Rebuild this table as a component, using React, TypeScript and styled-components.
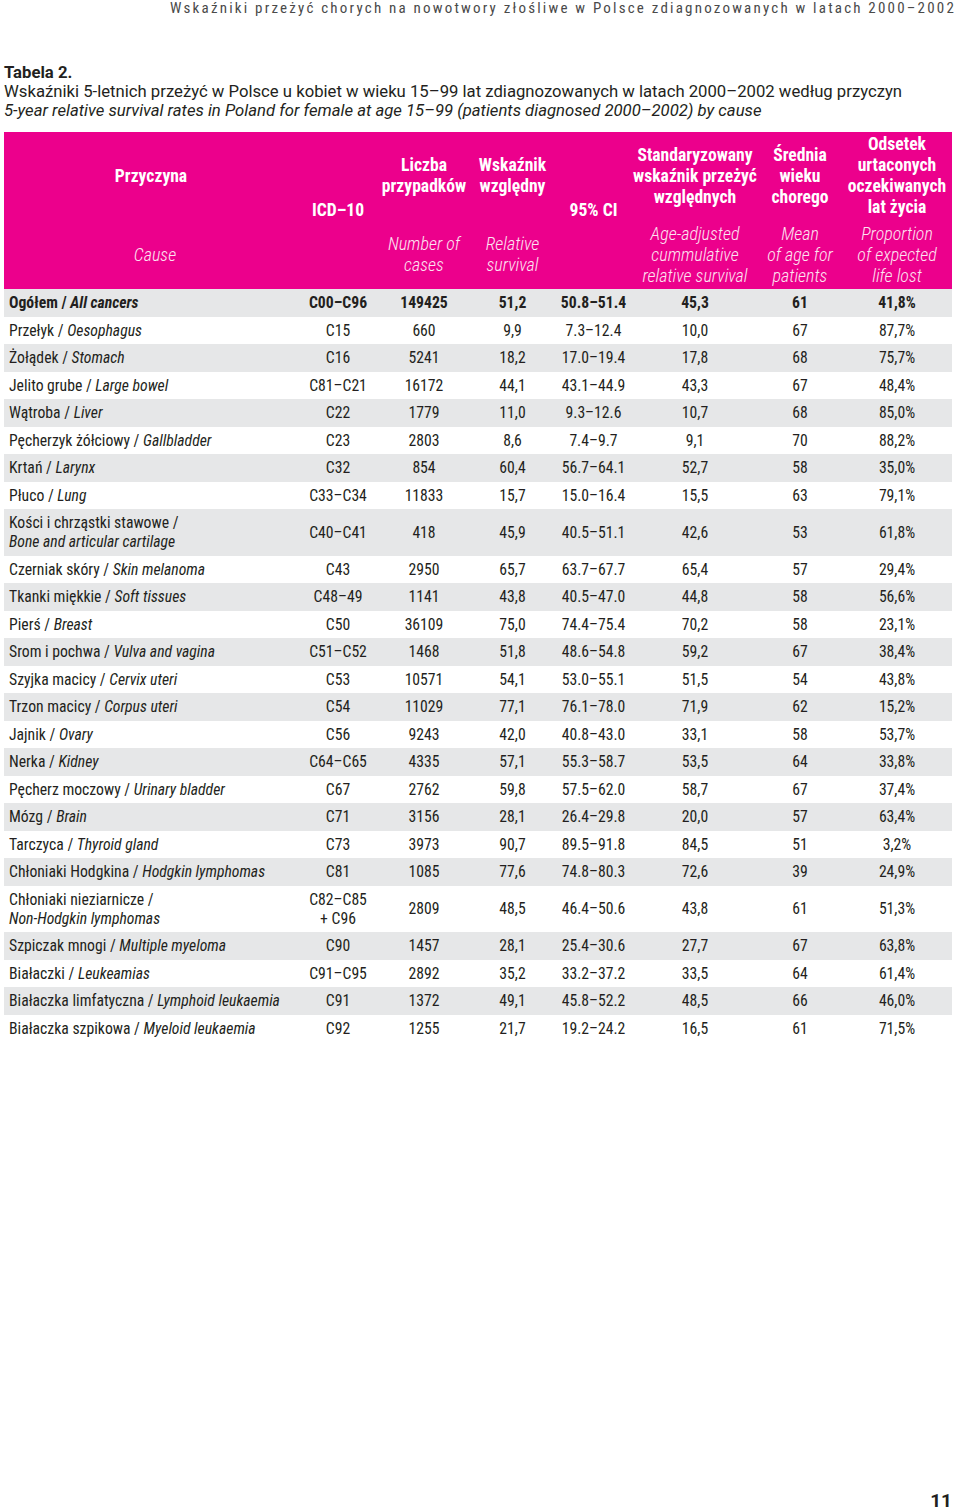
import React from "react";
import styled, { createGlobalStyle } from "styled-components";

const COND = `"Roboto Condensed", "Open Sans", sans-serif`;
const REG = `Roboto, "Liberation Sans", sans-serif`;
const COLS = "294px 80px 92px 85px 77px 126px 84px 110px";

const Global = createGlobalStyle`
  html, body { margin: 0; padding: 0; background: #ffffff; }
  body { font-family: ${COND}; color: #231f20; }
`;

const Page = styled.div`
  width: 960px;
  height: 1509px;
  position: relative;
  box-sizing: border-box;
  padding: 0 4px;
  display: flex;
  flex-direction: column;
`;

const RunningHead = styled.div`
  text-align: right;
  font-family: ${COND};
  font-size: 15px;
  letter-spacing: 2.2px;
  color: #4a4a4a;
  line-height: 17px;
`;

const Caption = styled.div`
  margin-top: 46px;
  font-family: ${REG};
  font-size: 16.7px;
  line-height: 19px;
  color: #231f20;
`;

const CapTitle = styled.div`
  font-weight: bold;
`;

const CapLine = styled.div<{ $italic?: boolean }>`
  font-style: ${(p) => (p.$italic ? "italic" : "normal")};
`;

const Table = styled.div`
  margin-top: 12px;
  width: 948px;
`;

const HeadRow = styled.div`
  display: grid;
  grid-template-columns: ${COLS};
  height: 157px;
  background: #ec008c;
  color: #ffffff;
`;

const HeadCell = styled.div<{ $single?: boolean }>`
  display: flex;
  flex-direction: column;
  justify-content: ${(p) => (p.$single ? "center" : "flex-start")};
  align-items: center;
  text-align: center;
`;

const HeadPl = styled.div`
  height: 88px;
  display: flex;
  align-items: center;
  justify-content: center;
  font-weight: bold;
  font-size: 17.6px;
  line-height: 21px;
  white-space: nowrap;
`;

const HeadSingle = styled.div`
  font-weight: bold;
  font-size: 17.6px;
  line-height: 21px;
`;

const HeadEn = styled.div<{ $shift?: number }>`
  height: 68px;
  display: flex;
  align-items: center;
  justify-content: center;
  font-style: italic;
  font-weight: 300;
  font-size: 18px;
  line-height: 21px;
  color: #fde4f1;
  white-space: nowrap;
  padding-left: ${(p) => p.$shift ?? 0}px;
`;

const Row = styled.div<{ $shade: boolean; $tall?: boolean }>`
  display: grid;
  grid-template-columns: ${COLS};
  height: ${(p) => (p.$tall ? "46.5px" : "27.5px")};
  background: ${(p) => (p.$shade ? "#e6e7e8" : "#ffffff")};
  align-items: center;
  font-size: 15.7px;
  line-height: 19px;
`;

const NameCell = styled.div<{ $bold?: boolean }>`
  padding-left: 5px;
  font-weight: ${(p) => (p.$bold ? "bold" : "normal")};
  white-space: nowrap;
`;

const En = styled.span`
  font-style: italic;
`;

const Cell = styled.div<{ $bold?: boolean }>`
  text-align: center;
  font-weight: ${(p) => (p.$bold ? "bold" : "normal")};
  white-space: nowrap;
`;

const PageNum = styled.div`
  position: absolute;
  right: 8px;
  bottom: -3px;
  font-family: ${REG};
  font-weight: bold;
  font-size: 19px;
  color: #231f20;
`;

type R = {
  pl: string;
  en: string;
  en2?: boolean;
  icd: string;
  n: string;
  rs: string;
  ci: string;
  aa: string;
  age: string;
  lost: string;
  bold?: boolean;
  tall?: boolean;
};

const rows: R[] = [
  { pl: "Ogółem", en: "All cancers", icd: "C00–C96", n: "149425", rs: "51,2", ci: "50.8–51.4", aa: "45,3", age: "61", lost: "41,8%", bold: true },
  { pl: "Przełyk", en: "Oesophagus", icd: "C15", n: "660", rs: "9,9", ci: "7.3–12.4", aa: "10,0", age: "67", lost: "87,7%" },
  { pl: "Żołądek", en: "Stomach", icd: "C16", n: "5241", rs: "18,2", ci: "17.0–19.4", aa: "17,8", age: "68", lost: "75,7%" },
  { pl: "Jelito grube", en: "Large bowel", icd: "C81–C21", n: "16172", rs: "44,1", ci: "43.1–44.9", aa: "43,3", age: "67", lost: "48,4%" },
  { pl: "Wątroba", en: "Liver", icd: "C22", n: "1779", rs: "11,0", ci: "9.3–12.6", aa: "10,7", age: "68", lost: "85,0%" },
  { pl: "Pęcherzyk żółciowy", en: "Gallbladder", icd: "C23", n: "2803", rs: "8,6", ci: "7.4–9.7", aa: "9,1", age: "70", lost: "88,2%" },
  { pl: "Krtań", en: "Larynx", icd: "C32", n: "854", rs: "60,4", ci: "56.7–64.1", aa: "52,7", age: "58", lost: "35,0%" },
  { pl: "Płuco", en: "Lung", icd: "C33–C34", n: "11833", rs: "15,7", ci: "15.0–16.4", aa: "15,5", age: "63", lost: "79,1%" },
  { pl: "Kości i chrząstki stawowe", en: "Bone and articular cartilage", en2: true, icd: "C40–C41", n: "418", rs: "45,9", ci: "40.5–51.1", aa: "42,6", age: "53", lost: "61,8%", tall: true },
  { pl: "Czerniak skóry", en: "Skin melanoma", icd: "C43", n: "2950", rs: "65,7", ci: "63.7–67.7", aa: "65,4", age: "57", lost: "29,4%" },
  { pl: "Tkanki miękkie", en: "Soft tissues", icd: "C48–49", n: "1141", rs: "43,8", ci: "40.5–47.0", aa: "44,8", age: "58", lost: "56,6%" },
  { pl: "Pierś", en: "Breast", icd: "C50", n: "36109", rs: "75,0", ci: "74.4–75.4", aa: "70,2", age: "58", lost: "23,1%" },
  { pl: "Srom i pochwa", en: "Vulva and vagina", icd: "C51–C52", n: "1468", rs: "51,8", ci: "48.6–54.8", aa: "59,2", age: "67", lost: "38,4%" },
  { pl: "Szyjka macicy", en: "Cervix uteri", icd: "C53", n: "10571", rs: "54,1", ci: "53.0–55.1", aa: "51,5", age: "54", lost: "43,8%" },
  { pl: "Trzon macicy", en: "Corpus uteri", icd: "C54", n: "11029", rs: "77,1", ci: "76.1–78.0", aa: "71,9", age: "62", lost: "15,2%" },
  { pl: "Jajnik", en: "Ovary", icd: "C56", n: "9243", rs: "42,0", ci: "40.8–43.0", aa: "33,1", age: "58", lost: "53,7%" },
  { pl: "Nerka", en: "Kidney", icd: "C64–C65", n: "4335", rs: "57,1", ci: "55.3–58.7", aa: "53,5", age: "64", lost: "33,8%" },
  { pl: "Pęcherz moczowy", en: "Urinary bladder", icd: "C67", n: "2762", rs: "59,8", ci: "57.5–62.0", aa: "58,7", age: "67", lost: "37,4%" },
  { pl: "Mózg", en: "Brain", icd: "C71", n: "3156", rs: "28,1", ci: "26.4–29.8", aa: "20,0", age: "57", lost: "63,4%" },
  { pl: "Tarczyca", en: "Thyroid gland", icd: "C73", n: "3973", rs: "90,7", ci: "89.5–91.8", aa: "84,5", age: "51", lost: "3,2%" },
  { pl: "Chłoniaki Hodgkina", en: "Hodgkin lymphomas", icd: "C81", n: "1085", rs: "77,6", ci: "74.8–80.3", aa: "72,6", age: "39", lost: "24,9%" },
  { pl: "Chłoniaki nieziarnicze", en: "Non-Hodgkin lymphomas", en2: true, icd: "C82–C85\n+ C96", n: "2809", rs: "48,5", ci: "46.4–50.6", aa: "43,8", age: "61", lost: "51,3%", tall: true },
  { pl: "Szpiczak mnogi", en: "Multiple myeloma", icd: "C90", n: "1457", rs: "28,1", ci: "25.4–30.6", aa: "27,7", age: "67", lost: "63,8%" },
  { pl: "Białaczki", en: "Leukeamias", icd: "C91–C95", n: "2892", rs: "35,2", ci: "33.2–37.2", aa: "33,5", age: "64", lost: "61,4%" },
  { pl: "Białaczka limfatyczna", en: "Lymphoid leukaemia", icd: "C91", n: "1372", rs: "49,1", ci: "45.8–52.2", aa: "48,5", age: "66", lost: "46,0%" },
  { pl: "Białaczka szpikowa", en: "Myeloid leukaemia", icd: "C92", n: "1255", rs: "21,7", ci: "19.2–24.2", aa: "16,5", age: "61", lost: "71,5%" },
];

const Lines = ({ text }: { text: string }) => (
  <>
    {text.split("\n").map((t, i) => (
      <div key={i}>{t}</div>
    ))}
  </>
);

export default function App() {
  return (
    <>
      <Global />
      <Page>
        <RunningHead>
          Wskaźniki przeżyć chorych na nowotwory złośliwe w Polsce zdiagnozowanych w latach 2000–2002
        </RunningHead>
        <Caption>
          <CapTitle>Tabela 2.</CapTitle>
          <CapLine>
            Wskaźniki 5-letnich przeżyć w Polsce u kobiet w wieku 15–99 lat zdiagnozowanych w latach 2000–2002 według przyczyn
          </CapLine>
          <CapLine $italic>
            5-year relative survival rates in Poland for female at age 15–99 (patients diagnosed 2000–2002) by cause
          </CapLine>
        </Caption>
        <Table>
          <HeadRow>
            <HeadCell>
              <HeadPl>Przyczyna</HeadPl>
              <HeadEn $shift={8}>Cause</HeadEn>
            </HeadCell>
            <HeadCell $single>
              <HeadSingle>ICD–10</HeadSingle>
            </HeadCell>
            <HeadCell>
              <HeadPl><div><Lines text={"Liczba\nprzypadków"} /></div></HeadPl>
              <HeadEn><div><Lines text={"Number of\ncases"} /></div></HeadEn>
            </HeadCell>
            <HeadCell>
              <HeadPl><div><Lines text={"Wskaźnik\nwzględny"} /></div></HeadPl>
              <HeadEn><div><Lines text={"Relative\nsurvival"} /></div></HeadEn>
            </HeadCell>
            <HeadCell $single>
              <HeadSingle>95% CI</HeadSingle>
            </HeadCell>
            <HeadCell>
              <HeadPl><div><Lines text={"Standaryzowany\nwskaźnik przeżyć\nwzględnych"} /></div></HeadPl>
              <HeadEn><div><Lines text={"Age-adjusted\ncummulative\nrelative survival"} /></div></HeadEn>
            </HeadCell>
            <HeadCell>
              <HeadPl><div><Lines text={"Średnia\nwieku\nchorego"} /></div></HeadPl>
              <HeadEn><div><Lines text={"Mean\nof age for\npatients"} /></div></HeadEn>
            </HeadCell>
            <HeadCell>
              <HeadPl><div><Lines text={"Odsetek\nurtaconych\noczekiwanych\nlat życia"} /></div></HeadPl>
              <HeadEn><div><Lines text={"Proportion\nof expected\nlife lost"} /></div></HeadEn>
            </HeadCell>
          </HeadRow>
          {rows.map((r, i) => (
            <Row key={r.pl} $shade={i % 2 === 0} $tall={r.tall}>
              <NameCell $bold={r.bold}>
                {r.en2 ? (
                  <>
                    <div>{r.pl} /</div>
                    <div><En>{r.en}</En></div>
                  </>
                ) : (
                  <>
                    {r.pl} / <En>{r.en}</En>
                  </>
                )}
              </NameCell>
              <Cell $bold={r.bold}><Lines text={r.icd} /></Cell>
              <Cell $bold={r.bold}>{r.n}</Cell>
              <Cell $bold={r.bold}>{r.rs}</Cell>
              <Cell $bold={r.bold}>{r.ci}</Cell>
              <Cell $bold={r.bold}>{r.aa}</Cell>
              <Cell $bold={r.bold}>{r.age}</Cell>
              <Cell $bold={r.bold}>{r.lost}</Cell>
            </Row>
          ))}
        </Table>
        <PageNum>11</PageNum>
      </Page>
    </>
  );
}
